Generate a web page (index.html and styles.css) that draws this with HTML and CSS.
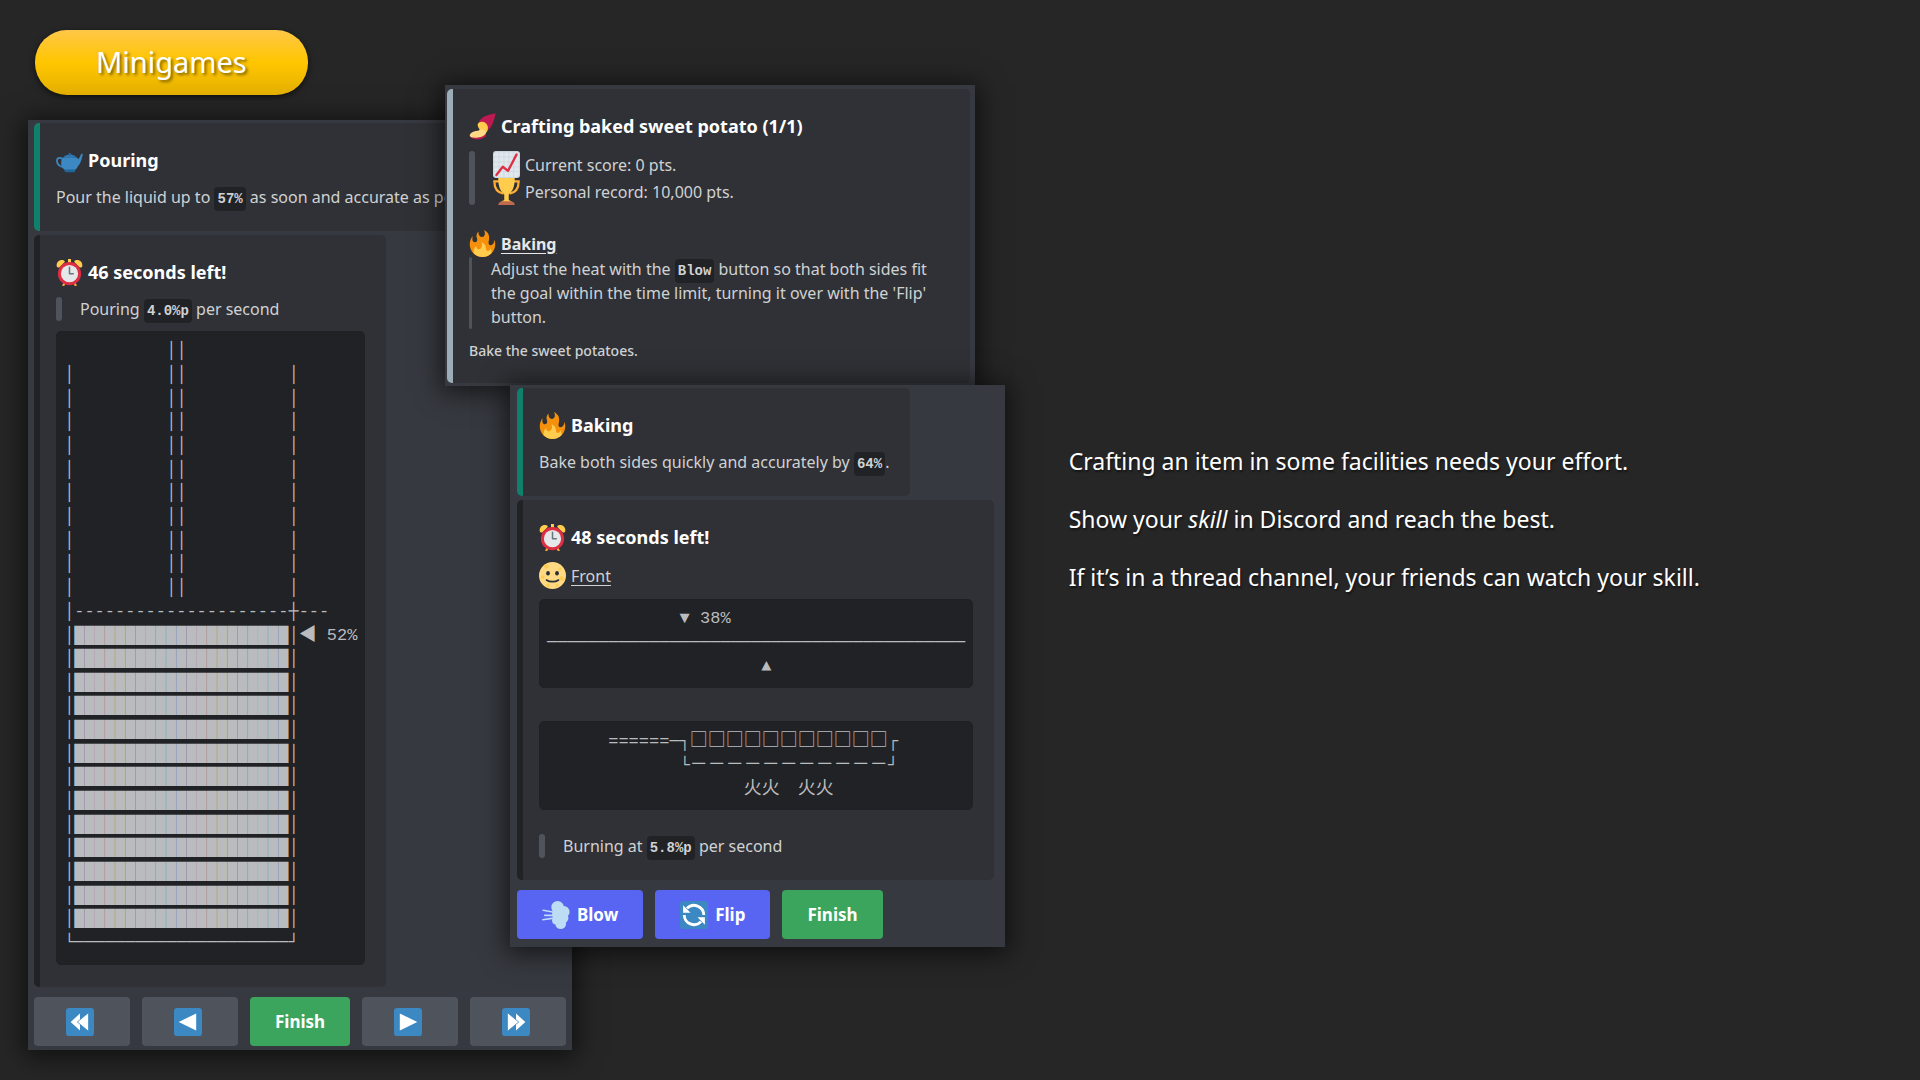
FILE: index.html
```html
<!DOCTYPE html>
<html lang="en">
<head>
<meta charset="utf-8">
<title>Minigames</title>
<link rel="stylesheet" href="styles.css">
</head>
<body>

<svg class="sprite" aria-hidden="true">
	<symbol id="teapot" viewBox="0 0 36 36">
		<path fill="none" stroke="#3b88c3" stroke-width="2.4" d="M9 16C4 13 1 15 1.300 19s4 7 9 8"/>
		<path fill="#3b88c3" d="M28 17c3-1 4-5 5.500-7.500.800-1 2.500-.500 2.300.500C34 16 33 24 27 27z"/>
		<path fill="#3b88c3" d="M8 15c2-3 19-3 21 0 3 8-1 14-4 16H12C8 28 5 23 8 15z"/>
		<path fill="#226699" d="M12 30h13c1 1 1 3-1 3.500H13c-2-.500-2-2.500-1-3.500z"/>
		<path fill="#3b88c3" d="M10 13c2-3 15-3 17 0z"/>
		<circle fill="#226699" cx="18.500" cy="9.500" r="2"/>
		<path fill="none" stroke="#226699" d="M8.500 14.500c4-1.500 16-1.500 20 0"/>
	</symbol>
	<symbol id="alarm" viewBox="0 0 36 36">
		<path fill="#ffcc4d" d="M1 9.500C0 4 5 0 10 1.500c2 .500 2 2 1 3L5 10.500c-1.500 1.500-3.500 1-4-1zM35 9.500C36 4 31 0 26 1.500c-2 .500-2 2-1 3l6 6c1.500 1.500 3.500 1 4-1zM16 0h4v6h-4z"/>
		<path fill="#ffac33" d="M8 35.500l2.500-5 2.500 1.500-2 4zM28 35.500l-2.500-5L23 32l2 4z"/>
		<circle fill="#dd2e44" cx="18" cy="19.500" r="15.500"/>
		<circle fill="#e6e7e8" cx="18" cy="19.500" r="11.500"/>
		<path fill="none" stroke="#66757f" stroke-width="2" stroke-linecap="round" stroke-linejoin="round" d="M18 11v8.500h5"/>
	</symbol>
	<symbol id="fire" viewBox="0 0 36 36">
		<path fill="#f4900c" d="M35 19c0-2.062-.367-4.039-1.040-5.868-.460 5.389-3.333 8.157-6.335 6.868-2.812-1.208-.917-5.917-.777-8.164.236-3.809-.012-8.169-6.931-11.794 2.875 5.500.333 8.917-2.333 9.125-2.958.231-5.667-2.542-4.667-7.042-3.238 2.386-3.332 6.402-2.333 9 1.042 2.708-.042 4.958-2.583 5.208-2.840.280-4.418-3.041-2.963-8.333C2.520 10.965 1 14.805 1 19c0 9.389 7.611 17 17 17s17-7.611 17-17z"/>
		<path fill="#ffcc4d" d="M28.394 23.999c.148 3.084-2.561 4.293-4.019 3.709-2.106-.843-1.541-2.291-2.083-5.291s-2.625-5.083-5.708-6c2.250 6.333-1.247 8.667-3.080 9.084-1.872.426-3.753-.001-3.968-4.007C7.352 23.668 6 26.676 6 30c0 .368.023.730.055 1.090C9.125 34.124 13.342 36 18 36s8.875-1.876 11.945-4.910c.032-.360.055-.722.055-1.090 0-2.187-.584-4.236-1.606-6.001z"/>
	</symbol>
	<symbol id="potato" viewBox="0 0 36 36">
		<path fill="#be1950" d="M35.500.500C28 1 19 4 15 9c-3 4-2 8 1 11s7 4 10 2C31 18 34 8 35.500.500z"/>
		<path fill="#be1950" d="M1 30c0 3 6 6 12 5 7-1 10-4 10-6l-9-3z"/>
		<path fill="#ffcc4d" d="M13 13c4-3 11-1 12 5 1 6-2 10-8 11-4 1-5-2-3-5 1-2-1-3-2-6s0-4 1-5z"/>
		<path fill="#ffd983" d="M1 30c0-3 5-6 9-6 3 0 4-2 6-2 5 0 8 3 6 6-3 4-9 5-14 5-4 0-7-1-7-3z"/>
	</symbol>
	<symbol id="chart" viewBox="0 0 36 36">
		<rect fill="#ccd6dd" width="36" height="36" rx="4"/>
		<rect fill="#e1e8ed" x="1.500" y="1.500" width="33" height="33" rx="3"/>
		<path fill="none" stroke="#ccd6dd" d="M1 8h34M1 14.500h34M1 21h34M1 27.500h34M8 1v34M14.500 1v34M21 1v34M27.500 1v34"/>
		<path fill="none" stroke="#dd2e44" stroke-width="3" stroke-linecap="round" stroke-linejoin="round" d="M4.500 32L13 21l7 5.500L31.500 4.500"/>
	</symbol>
	<symbol id="trophy" viewBox="0 0 36 36">
		<path fill="none" stroke="#ffac33" stroke-width="3" d="M9 4.500H1.800c0 9 3 14.500 12.200 16.500M27 4.500h7.200c0 9-3 14.500-12.200 16.500"/>
		<path fill="#ffcc4d" d="M7 0h22c0 12-3 18-8 21.500V29c0 1 4 1.500 4 3.500H11c0-2 4-2.500 4-3.500v-7.500C10 18 7 12 7 0z"/>
		<path fill="#c1694f" d="M7 36c0-3.500 3-5 6-5h10c3 0 6 1.500 6 5z"/>
	</symbol>
	<symbol id="moon" viewBox="0 0 36 36">
		<circle fill="#ffd983" cx="18" cy="18" r="18"/>
		<g fill="#ffcc4d">
			<circle cx="10" cy="6" r="3"/><circle cx="28" cy="9" r="2"/><circle cx="5" cy="20" r="2.500"/>
			<circle cx="30" cy="22" r="3"/><circle cx="12" cy="31" r="2.500"/><circle cx="24" cy="31" r="2"/>
		</g>
		<ellipse fill="#292f33" cx="12" cy="15" rx="2.500" ry="3"/>
		<ellipse fill="#292f33" cx="24" cy="15" rx="2.500" ry="3"/>
		<path fill="none" stroke="#292f33" stroke-width="2.200" stroke-linecap="round" d="M10 24c4 3 12 3 16 0"/>
	</symbol>
	<symbol id="wind" viewBox="0 0 36 36">
		<g fill="#bdddf4">
			<circle cx="20" cy="8" r="8"/><circle cx="28" cy="14" r="7.500"/><circle cx="22" cy="17" r="9"/>
			<circle cx="28" cy="22" r="6"/><circle cx="18" cy="25" r="5"/><circle cx="24" cy="29" r="7"/>
		</g>
		<path fill="none" stroke="#bdddf4" stroke-width="2" stroke-linecap="round" d="M1.500 12l14 2.500M3.500 18.500H15M1 24l14-2"/>
	</symbol>
	<symbol id="flip" viewBox="0 0 36 36">
		<rect fill="#3b88c3" width="36" height="36" rx="4"/>
		<path fill="none" stroke="#fff" stroke-width="3.600" d="M9 9.500A12.500 12.500 0 0 1 30.500 18M27 26.500A12.500 12.500 0 0 1 5.500 18"/>
		<path fill="#fff" d="M4 5.500V15h9.500zM32 30.500V21h-9.500z"/>
	</symbol>
	<symbol id="rewind" viewBox="0 0 36 36">
		<rect fill="#3b88c3" width="36" height="36" rx="4"/>
		<path fill="#fff" d="M6 18L18 7v22z"/>
		<path fill="#fff" stroke="#3b88c3" d="M14.500 18L29 6v24z"/>
	</symbol>
	<symbol id="back" viewBox="0 0 36 36">
		<rect fill="#3b88c3" width="36" height="36" rx="4"/>
		<path fill="#fff" d="M6 18L28.500 7v22z"/>
	</symbol>
</svg>

<main class="slide">
	<section class="stage">
		<h1 class="pill">Minigames</h1>

		<article class="window pouring">
			<div class="embed green">
				<h2 class="title"><svg class="emoji"><use href="#teapot"/></svg>Pouring</h2>
				<p class="nowrap">Pour the liquid up to <code>57%</code> as soon and accurate as possible.</p>
			</div>
			<div class="embed">
				<h2 class="title"><svg class="emoji"><use href="#alarm"/></svg>46 seconds left!</h2>
				<blockquote>Pouring <code>4.0%p</code> per second</blockquote>
				<pre class="block">
<span>          ││</span>
<span>│         ││          │</span>
<span>│         ││          │</span>
<span>│         ││          │</span>
<span>│         ││          │</span>
<span>│         ││          │</span>
<span>│         ││          │</span>
<span>│         ││          │</span>
<span>│         ││          │</span>
<span>│         ││          │</span>
<span>│         ││          │</span>
<span>│---------------------┼---</span>
<span>│█████████████████████│<i>◀</i> 52%</span>
<span>│█████████████████████│</span>
<span>│█████████████████████│</span>
<span>│█████████████████████│</span>
<span>│█████████████████████│</span>
<span>│█████████████████████│</span>
<span>│█████████████████████│</span>
<span>│█████████████████████│</span>
<span>│█████████████████████│</span>
<span>│█████████████████████│</span>
<span>│█████████████████████│</span>
<span>│█████████████████████│</span>
<span>│█████████████████████│</span>
<span>└─────────────────────┘</span>
</pre>
			</div>
			<div class="buttons">
				<button class="btn nav" type="button" aria-label="Much less"><svg class="icon"><use href="#rewind"/></svg></button>
				<button class="btn nav" type="button" aria-label="Less"><svg class="icon"><use href="#back"/></svg></button>
				<button class="btn success" type="button">Finish</button>
				<button class="btn nav" type="button" aria-label="More"><svg class="icon mirror"><use href="#back"/></svg></button>
				<button class="btn nav" type="button" aria-label="Much more"><svg class="icon mirror"><use href="#rewind"/></svg></button>
			</div>
		</article>

		<article class="window crafting">
			<div class="embed grey">
				<h2 class="title"><svg class="emoji"><use href="#potato"/></svg>Crafting baked sweet potato (1/1)</h2>
				<blockquote>
					<div class="line"><svg class="emoji"><use href="#chart"/></svg>Current score: 0 pts.</div>
					<div class="line"><svg class="emoji"><use href="#trophy"/></svg>Personal record: 10,000 pts.</div>
				</blockquote>
				<h3 class="line field"><svg class="emoji"><use href="#fire"/></svg><u>Baking</u></h3>
				<blockquote class="thin">Adjust the heat with the <code>Blow</code> button so that both sides fit the goal within the time limit, turning it over with the 'Flip' button.</blockquote>
				<footer>Bake the sweet potatoes.</footer>
			</div>
		</article>

		<article class="window baking">
			<div class="embed green">
				<h2 class="title"><svg class="emoji"><use href="#fire"/></svg>Baking</h2>
				<p class="nowrap">Bake both sides quickly and accurately by <code>64%</code>.</p>
			</div>
			<div class="embed">
				<h2 class="title"><svg class="emoji"><use href="#alarm"/></svg>48 seconds left!</h2>
				<p class="line"><svg class="emoji"><use href="#moon"/></svg><u>Front</u></p>
				<pre class="block">
<span>             ▼ 38%</span>
<span>─────────────────────────────────────────</span>
<span>                     ▲</span>
</pre>
				<pre class="block pan">
<span>      ======─┐<i>□□□□□□□□□□□</i>┌</span>
<span>             └<i>－－－－－－－－－－－</i>┘</span>
<span>              <i>　　　火火　火火</i></span>
</pre>
				<blockquote class="rate">Burning at <code>5.8%p</code> per second</blockquote>
			</div>
			<div class="buttons">
				<button class="btn primary" type="button"><svg class="icon"><use href="#wind"/></svg>Blow</button>
				<button class="btn primary" type="button"><svg class="icon"><use href="#flip"/></svg>Flip</button>
				<button class="btn success" type="button">Finish</button>
			</div>
		</article>
	</section>

	<section class="copy">
		<p>Crafting an item in some facilities needs your effort.</p>
		<p>Show your <em>skill</em> in Discord and reach the best.</p>
		<p>If it’s in a thread channel, your friends can watch your skill.</p>
	</section>
</main>

</body>
</html>
```
FILE: styles.css
```css
* {box-sizing: border-box;}

body {
	margin: 0;
	background: #262626;
	color: #d0d1d3;
	font: 16px/24px "Noto Sans", sans-serif;
}
h1, h2, h3, p, pre, blockquote {margin: 0;}

.sprite {
	position: absolute;
	width: 0;
	height: 0;
}

.slide {
	display: grid;
	grid-template-columns: 5fr 4fr;
	min-height: 100vh;
}
.stage {
	position: relative;
	padding: 30px 35px;
}

.pill {
	display: inline-block;
	padding: 11px 61px 13px;
	border-radius: 32px;
	background: linear-gradient(#ffc748, #ffc600 50%, #e4b000);
	box-shadow: 0 2px 6px rgba(0,0,0,0.6);
	color: #fff;
	font-size: 29px;
	font-weight: 400;
	line-height: 41px;
	text-shadow: 2px 2px 3px rgba(0,0,0,0.5);
}

/* --------------------------------- */

.window {
	position: absolute;
	background: #36393f;
	box-shadow: 0 3px 24px 4px rgba(0,0,0,0.6);
}
.pouring {
	left: 28px;
	top: 120px;
	padding: 3px 6px 4px;
}
.crafting {
	left: 445px;
	top: 85px;
	max-width: 530px;
	padding: 4px 5px 3px 2px;
}
.baking {
	left: 510px;
	top: 385px;
	padding: 3px 11px 8px 7px;
}

/* --------------------------------- */

.embed {
	width: fit-content;
	padding: 24px 21px 22px 16px;
	border-left: 6px solid #202225;
	border-radius: 5px;
	background: #2f3136;
}
.embed + .embed {margin-top: 4px;}
.embed.green {border-color: #11806a;}
.embed.grey {border-color: #9badb7;}

.title, .line {
	display: flex;
	align-items: center;
	gap: 5px;
	height: 27px;
}
.title {
	margin-bottom: 11px;
	padding-bottom: 1px;
	color: #fff;
	font-size: 18px;
	font-weight: 700;
}
.emoji {
	width: 27px;
	height: 27px;
}
.nowrap {white-space: nowrap;}

.field {
	margin-top: 25px;
	color: #e8e9ea;
	font-size: 16px;
}
u {text-underline-offset: 3px;}

blockquote {
	position: relative;
	padding-left: 24px;
}
blockquote::before {
	content: "";
	position: absolute;
	left: 0; top: 0; bottom: 0;
	width: 6px;
	border-radius: 3px;
	background: #4f545c;
}
blockquote.thin {padding-left: 22px;}
blockquote.thin::before {width: 3px;}

footer {
	margin-top: 12px;
	font-size: 14px;
	font-weight: 500;
	line-height: 20px;
}

code {
	padding: 4px 3px;
	border-radius: 4px;
	background: #202225;
	font: 700 14px/14px "Liberation Mono", monospace;
}

/* rows alternate so that three of them take 71px */
.block {
	display: grid;
	grid-auto-rows: 24px 24px 23px;
	margin-top: 10px;
	padding: 7px 7px 9px;
	border: 1px solid #1f2124;
	border-radius: 5px;
	background: #202225;
	color: #b9bbbe;
	font: 17px/24px "Liberation Mono", monospace;
}
.block i {
	font: 18px/18px "Noto Sans CJK JP", sans-serif;
}
.block.pan {margin-top: 33px;}
.rate {margin-top: 24px;}

/* --------------------------------- */

.buttons {
	display: flex;
	gap: 12px;
	margin-top: 10px;
}
.btn {
	display: flex;
	align-items: center;
	justify-content: center;
	gap: 7px;
	min-width: 96px;
	height: 49px;
	padding: 0 25px;
	border: 0;
	border-radius: 4px;
	background: #4f545c;
	color: #fff;
	font: 700 17px/24px "Noto Sans", sans-serif;
}
.btn.nav {padding: 0 28px 0 24px;}
.btn.primary {background: #5865f2;}
.btn.success {background: #3ba55d;}
.icon {
	width: 28px;
	height: 28px;
}
.mirror {transform: scaleX(-1);}

/* --------------------------------- */

.copy {
	display: flex;
	flex-direction: column;
	justify-content: center;
	gap: 26px;
	padding: 0 0 42px 2px;
	color: #fff;
	font-size: 23px;
	line-height: 32px;
	text-shadow: 1px 2px 2px rgba(0,0,0,0.5);
}
```
